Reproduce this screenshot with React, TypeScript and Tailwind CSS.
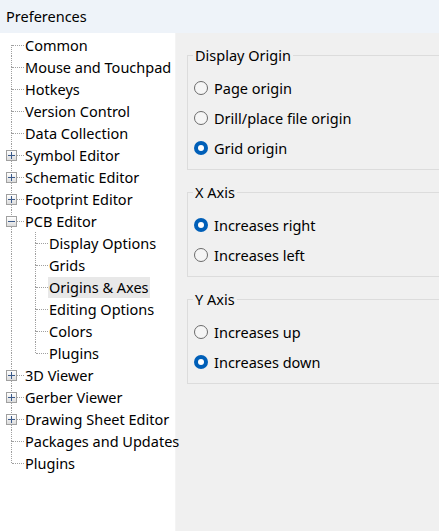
import React from "react";

type Node = { label: string; expander?: "plus" | "minus"; children?: string[]; selected?: string };

const tree: Node[] = [
  { label: "Common" },
  { label: "Mouse and Touchpad" },
  { label: "Hotkeys" },
  { label: "Version Control" },
  { label: "Data Collection" },
  { label: "Symbol Editor", expander: "plus" },
  { label: "Schematic Editor", expander: "plus" },
  { label: "Footprint Editor", expander: "plus" },
  {
    label: "PCB Editor",
    expander: "minus",
    children: ["Display Options", "Grids", "Origins & Axes", "Editing Options", "Colors", "Plugins"],
    selected: "Origins & Axes",
  },
  { label: "3D Viewer", expander: "plus" },
  { label: "Gerber Viewer", expander: "plus" },
  { label: "Drawing Sheet Editor", expander: "plus" },
  { label: "Packages and Updates" },
  { label: "Plugins" },
];

const font = { fontFamily: '"Noto Sans", "Segoe UI", sans-serif' };

function Expander({ kind }: { kind: "plus" | "minus" }) {
  return (
    <div className="absolute left-[6px] top-[6px] w-[11px] h-[11px] border border-[#a0a0a0] bg-gradient-to-b from-[#ffffff] to-[#dcdcdc] flex items-center justify-center">
      <svg width="9" height="9" viewBox="0 0 9 9">
        <rect x="1" y="4" width="7" height="1" fill="#3b5a8a" />
        {kind === "plus" && <rect x="4" y="1" width="1" height="7" fill="#3b5a8a" />}
      </svg>
    </div>
  );
}

function Cell({
  top,
  bottom,
  connector,
  expander,
}: {
  top: boolean;
  bottom: boolean;
  connector: boolean;
  expander?: "plus" | "minus";
}) {
  return (
    <div className="relative w-[24px] h-[22px] shrink-0">
      {top && <div className="absolute left-[11px] top-0 h-[11px] border-l border-dotted border-[#a0a0a0]" />}
      {bottom && <div className="absolute left-[11px] top-[11px] h-[11px] border-l border-dotted border-[#a0a0a0]" />}
      {connector && <div className="absolute left-[12px] top-[11px] w-[12px] border-t border-dotted border-[#a0a0a0]" />}
      {expander && <Expander kind={expander} />}
    </div>
  );
}

function Radio({ checked, label }: { checked: boolean; label: string }) {
  return (
    <div className="h-[30px] flex items-center gap-[6px]">
      {checked ? (
        <div className="w-[14px] h-[14px] rounded-full bg-[#005fb8] flex items-center justify-center">
          <div className="w-[6px] h-[6px] rounded-full bg-white" />
        </div>
      ) : (
        <div className="w-[14px] h-[14px] rounded-full border border-[#6b6b6b] bg-[#f5f5f5]" />
      )}
      <span className="text-[14.5px] text-black leading-[20px]">{label}</span>
    </div>
  );
}

function Group({ title, items }: { title: string; items: [string, boolean][] }) {
  return (
    <fieldset className="w-[290px] border border-[#dcdcdc] px-[5px] pb-[6px] mt-[12px]">
      <legend className="px-[2px] text-[14.5px] leading-[20px] text-black">{title}</legend>
      <div className="pt-[8px] pl-[1px]">
        {items.map(([l, c]) => (
          <Radio key={l} label={l} checked={c} />
        ))}
      </div>
    </fieldset>
  );
}

export default function App() {
  const rows: React.ReactNode[] = [];
  tree.forEach((n, i) => {
    const first = i === 0;
    const last = i === tree.length - 1;
    rows.push(
      <div key={n.label} className="flex h-[22px] items-center">
        <Cell top={!first} bottom={!last} connector expander={n.expander} />
        <span className="text-[14.5px] leading-[20px] px-[1px] text-black whitespace-nowrap">{n.label}</span>
      </div>
    );
    if (n.children) {
      n.children.forEach((c, j) => {
        const lastChild = j === n.children!.length - 1;
        rows.push(
          <div key={n.label + c} className="flex h-[22px] items-center">
            <Cell top bottom connector={false} />
            <Cell top bottom={!lastChild} connector />
            <span
              className={
                "text-[14.5px] leading-[21px] px-[1px] text-black whitespace-nowrap " +
                (c === n.selected ? "bg-[#e8e8e8]" : "")
              }
            >
              {c}
            </span>
          </div>
        );
      });
    }
  });

  return (
    <div className="w-[439px] h-[531px] flex flex-col overflow-hidden bg-[#f0f0f0]" style={font}>
      <div className="h-[33px] shrink-0 bg-[#eef3f9] flex items-center px-[6px] text-[14.5px] text-black">
        Preferences
      </div>
      <div className="flex flex-1 min-h-0">
        <div className="w-[176px] shrink-0 bg-white pt-[1px] border-r border-[#f4f4f4]">{rows}</div>
        <div className="flex-1 overflow-hidden pl-[11px]">
          <Group
            title="Display Origin"
            items={[
              ["Page origin", false],
              ["Drill/place file origin", false],
              ["Grid origin", true],
            ]}
          />
          <Group
            title="X Axis"
            items={[
              ["Increases right", true],
              ["Increases left", false],
            ]}
          />
          <Group
            title="Y Axis"
            items={[
              ["Increases up", false],
              ["Increases down", true],
            ]}
          />
        </div>
      </div>
    </div>
  );
}
